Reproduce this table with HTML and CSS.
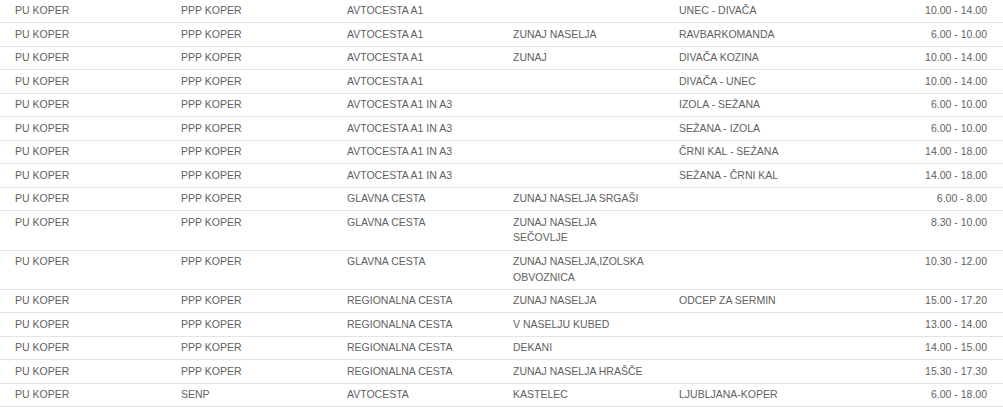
FILE: index.html
```html
<!DOCTYPE html>
<html lang="sl">
<head>
<meta charset="utf-8">
<title>Meritve hitrosti</title>
<link rel="stylesheet" href="styles.css">
</head>
<body>
<div class="wrap">
<table class="tbl">
<colgroup>
<col class="c"><col class="c"><col class="c"><col class="c"><col class="c"><col>
</colgroup>
<tbody>
<tr><td>PU KOPER</td><td>PPP KOPER</td><td>AVTOCESTA A1</td><td></td><td>UNEC - DIVAČA</td><td class="t">10.00 - 14.00</td></tr>
<tr><td>PU KOPER</td><td>PPP KOPER</td><td>AVTOCESTA A1</td><td>ZUNAJ NASELJA</td><td>RAVBARKOMANDA</td><td class="t">6.00 - 10.00</td></tr>
<tr><td>PU KOPER</td><td>PPP KOPER</td><td>AVTOCESTA A1</td><td>ZUNAJ</td><td>DIVAČA KOZINA</td><td class="t">10.00 - 14.00</td></tr>
<tr><td>PU KOPER</td><td>PPP KOPER</td><td>AVTOCESTA A1</td><td></td><td>DIVAČA - UNEC</td><td class="t">10.00 - 14.00</td></tr>
<tr><td>PU KOPER</td><td>PPP KOPER</td><td>AVTOCESTA A1 IN A3</td><td></td><td>IZOLA - SEŽANA</td><td class="t">6.00 - 10.00</td></tr>
<tr><td>PU KOPER</td><td>PPP KOPER</td><td>AVTOCESTA A1 IN A3</td><td></td><td>SEŽANA - IZOLA</td><td class="t">6.00 - 10.00</td></tr>
<tr><td>PU KOPER</td><td>PPP KOPER</td><td>AVTOCESTA A1 IN A3</td><td></td><td>ČRNI KAL - SEŽANA</td><td class="t">14.00 - 18.00</td></tr>
<tr><td>PU KOPER</td><td>PPP KOPER</td><td>AVTOCESTA A1 IN A3</td><td></td><td>SEŽANA - ČRNI KAL</td><td class="t">14.00 - 18.00</td></tr>
<tr><td>PU KOPER</td><td>PPP KOPER</td><td>GLAVNA CESTA</td><td>ZUNAJ NASELJA SRGAŠI</td><td></td><td class="t">6.00 - 8.00</td></tr>
<tr><td>PU KOPER</td><td>PPP KOPER</td><td>GLAVNA CESTA</td><td>ZUNAJ NASELJA SEČOVLJE</td><td></td><td class="t">8.30 - 10.00</td></tr>
<tr><td>PU KOPER</td><td>PPP KOPER</td><td>GLAVNA CESTA</td><td>ZUNAJ NASELJA,IZOLSKA OBVOZNICA</td><td></td><td class="t">10.30 - 12.00</td></tr>
<tr><td>PU KOPER</td><td>PPP KOPER</td><td>REGIONALNA CESTA</td><td>ZUNAJ NASELJA</td><td>ODCEP ZA SERMIN</td><td class="t">15.00 - 17.20</td></tr>
<tr><td>PU KOPER</td><td>PPP KOPER</td><td>REGIONALNA CESTA</td><td>V NASELJU KUBED</td><td></td><td class="t">13.00 - 14.00</td></tr>
<tr><td>PU KOPER</td><td>PPP KOPER</td><td>REGIONALNA CESTA</td><td>DEKANI</td><td></td><td class="t">14.00 - 15.00</td></tr>
<tr><td>PU KOPER</td><td>PPP KOPER</td><td>REGIONALNA CESTA</td><td>ZUNAJ NASELJA HRAŠČE</td><td></td><td class="t">15.30 - 17.30</td></tr>
<tr><td>PU KOPER</td><td>SENP</td><td>AVTOCESTA</td><td>KASTELEC</td><td>LJUBLJANA-KOPER</td><td class="t">6.00 - 18.00</td></tr>
</tbody>
</table>
</div>
</body>
</html>
```

FILE: styles.css
```css
html, body {
  margin: 0;
  padding: 0;
  background: #ffffff;
}

.wrap {
  margin-top: -1px;
}

.tbl {
  width: 1003px;
  border-collapse: collapse;
  table-layout: fixed;
  font-family: "Liberation Sans", Arial, sans-serif;
  font-size: 10.5px;
  line-height: 15.7px;
  color: #616161;
}

.tbl col.c {
  width: 166px;
}

.tbl td {
  padding: 3.4px 15px 3.4px 15px;
  vertical-align: top;
  border-top: 1px solid #e4e4e4;
}

.tbl tr:last-child td {
  border-bottom: 1px solid #e4e4e4;
}

.tbl td.t {
  text-align: right;
  padding-right: 16px;
}
```
